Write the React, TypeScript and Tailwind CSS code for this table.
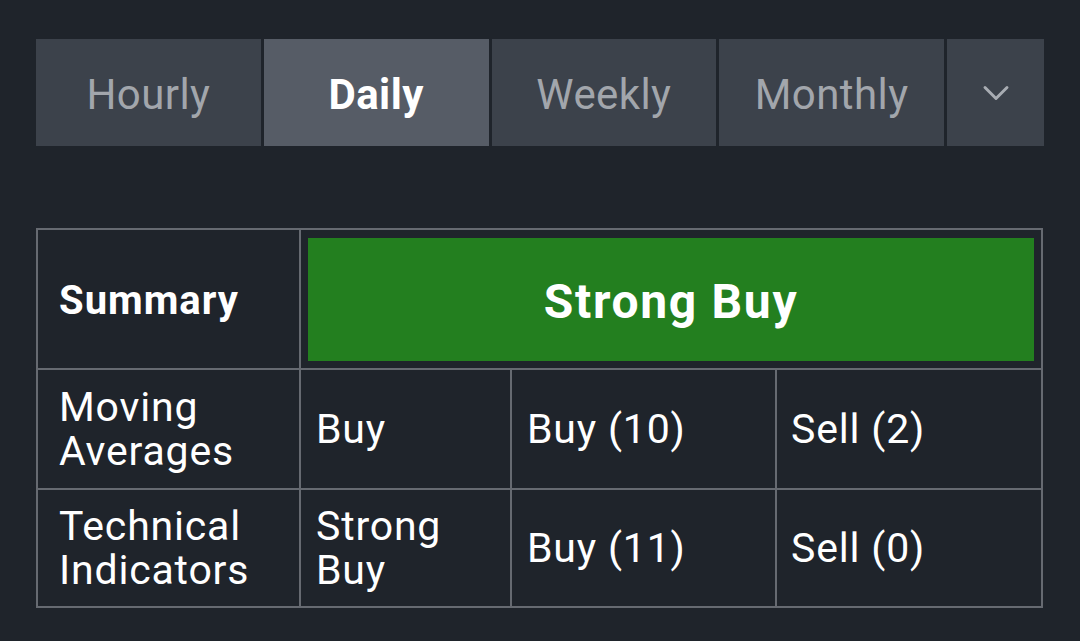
import { ChevronDown } from "lucide-react";

const tabs = [
  { label: "Hourly", active: false },
  { label: "Daily", active: true },
  { label: "Weekly", active: false },
  { label: "Monthly", active: false },
];

const rows = [
  { name: ["Moving", "Averages"], summary: ["Buy"], buy: "Buy (10)", sell: "Sell (2)", h: "h-[120px]" },
  { name: ["Technical", "Indicators"], summary: ["Strong", "Buy"], buy: "Buy (11)", sell: "Sell (0)", h: "h-[118px]" },
];

export default function App() {
  return (
    <div className="w-[1080px] h-[641px] bg-[#1f242b] pl-[36px] pr-[36px] pt-[39px] font-['Roboto',sans-serif] overflow-hidden">
      <div className="grid grid-cols-[1fr_1fr_1fr_1fr_97px] gap-[3px] h-[107px] w-[1008px]">
        {tabs.map((t) => (
          <div
            key={t.label}
            className={
              t.active
                ? "flex items-center justify-center pt-[3px] bg-[#565c66] text-white font-bold text-[42px] tracking-[0.01em]"
                : "flex items-center justify-center pt-[3px] bg-[#3c424b] text-[#a2a6ac] text-[42px] tracking-[0.01em]"
            }
          >
            {t.label}
          </div>
        ))}
        <div className="flex items-center justify-center bg-[#3c424b]">
          <ChevronDown className="w-[44px] h-[44px] text-[#a8acb2]" strokeWidth={1.6} />
        </div>
      </div>

      <table className="mt-[82px] w-[1007px] table-fixed border-collapse text-white text-[41px] leading-[44px] tracking-[0.02em]">
        <colgroup>
          <col className="w-[263px]" />
          <col className="w-[211px]" />
          <col className="w-[265px]" />
          <col />
        </colgroup>
        <tbody>
          <tr className="h-[140px]">
            <td className="border-2 border-[#666a71] pl-[21px] pt-[3px] font-bold text-[40px] tracking-[0.025em]">Summary</td>
            <td colSpan={3} className="border-2 border-[#666a71] p-[7px]">
              <div className="h-[123px] pt-[5px] bg-[#237f1f] flex items-center justify-center font-bold text-[48px] tracking-[0.035em]">
                Strong Buy
              </div>
            </td>
          </tr>
          {rows.map((r) => (
            <tr key={r.buy} className={r.h}>
              <td className="border-2 border-[#666a71] pl-[21px]">
                {r.name.map((n) => (
                  <div key={n}>{n}</div>
                ))}
              </td>
              <td className="border-2 border-[#666a71] pl-[15px]">
                {r.summary.map((n) => (
                  <div key={n}>{n}</div>
                ))}
              </td>
              <td className="border-2 border-[#666a71] pl-[15px]">{r.buy}</td>
              <td className="border-2 border-[#666a71] pl-[14px]">{r.sell}</td>
            </tr>
          ))}
        </tbody>
      </table>
    </div>
  );
}
